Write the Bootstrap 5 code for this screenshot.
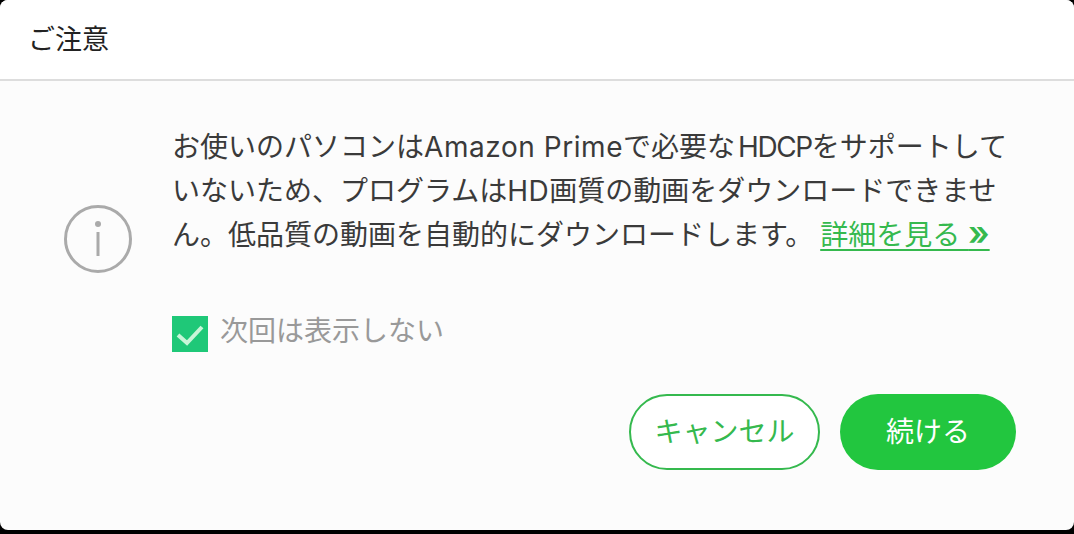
<!DOCTYPE html>
<html lang="ja">
<head>
<meta charset="utf-8">
<title>ご注意</title>
<link href="https://cdn.jsdelivr.net/npm/bootstrap@5.3.0/dist/css/bootstrap.min.css" rel="stylesheet">
<style>
html,body{height:100%;background:#000;margin:0;overflow:hidden}
body{font-family:Inter,"Noto Sans CJK JP",sans-serif;color:#333}
.dlg{width:1074px;height:530px;background:#fcfcfc;border-radius:8px;display:flex;flex-direction:column;overflow:hidden}
.dlg-head{height:81px;background:#fff;border-bottom:2px solid #ddd;padding:2px 28px 0;display:flex;align-items:center;font-size:27px;color:#222;flex:none}
.dlg-main{padding:44px 58px 0 64px;display:flex;flex:1 1 auto;flex-direction:column}
.info-ico{width:68px;height:68px;flex:none;margin-right:40px;margin-top:80px}
.msg{font-size:28px;line-height:44px;color:#3a3a3a;white-space:nowrap;margin:0}
.latin{letter-spacing:.02em}
.caps{letter-spacing:-.05em;margin-left:3px}
.more{color:#35b94e;text-decoration:underline;text-underline-offset:4px;margin-left:7px}
.chevs{font-weight:600;font-size:34px;line-height:1}
.chk-row{margin-top:59px;color:#999;font-size:28px;line-height:30px}
.chk-box{width:36px;height:36px;background:#1fc878;flex:none;margin-right:12px;display:block}
.act{margin-top:42px;gap:20px}
.pill{height:76px;border-radius:38px;font-size:28px;line-height:1;display:flex;align-items:center;justify-content:center;padding:0}
.pill-out{width:191px;border:2px solid #35b94e;color:#35b94e;background:#fff}
.pill-out:hover{color:#35b94e;background:#fff;border-color:#35b94e}
.pill-fill{width:176px;background:#22c63f;color:#fff;border:0}
.pill-fill:hover{background:#22c63f;color:#fff}
</style>
</head>
<body>
<div class="dlg">
  <div class="dlg-head">ご注意</div>
  <div class="dlg-main">
    <div class="d-flex align-items-start">
      <svg class="info-ico" viewBox="0 0 68 68" fill="none" aria-hidden="true">
        <circle cx="34" cy="34" r="32.5" stroke="#aaa" stroke-width="3"/>
        <circle cx="34" cy="19" r="3" fill="#aaa"/>
        <path d="M34 27V51" stroke="#aaa" stroke-width="3"/>
      </svg>
      <div>
        <p class="msg">お使いのパソコンは<span class="latin">Amazon Prime</span>で必要な<span class="caps">HDCP</span>をサポートして<br>いないため、プログラムは<span class="latin">HD</span>画質の動画をダウンロードできませ<br>ん。低品質の動画を自動的にダウンロードします。<a href="#" class="more">詳細を見る <span class="chevs">»</span></a></p>
        <div class="d-flex align-items-start chk-row">
          <svg class="chk-box" viewBox="0 0 36 36" fill="none" aria-hidden="true"><path d="M6 19L15 27L30 11" stroke="#c8f5d8" stroke-width="4"/></svg>
          <span>次回は表示しない</span>
        </div>
      </div>
    </div>
    <div class="d-flex justify-content-end act">
      <button type="button" class="btn pill pill-out">キャンセル</button>
      <button type="button" class="btn pill pill-fill">続ける</button>
    </div>
  </div>
</div>
<script src="https://cdn.jsdelivr.net/npm/bootstrap@5.3.0/dist/js/bootstrap.bundle.min.js"></script>
</body>
</html>
